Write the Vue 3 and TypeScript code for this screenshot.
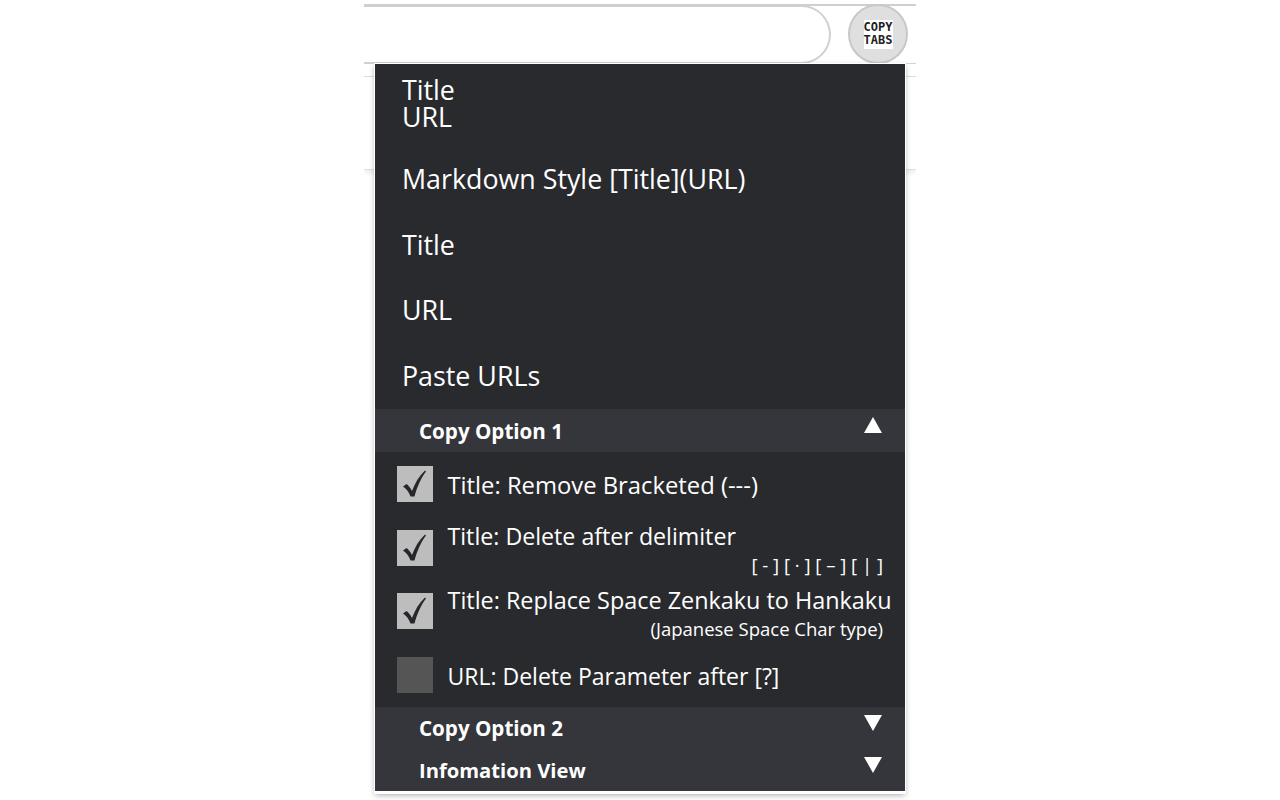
<template>
  <div class="stage">
    <div class="toolbar">
      <div class="urlbar"></div>
      <div class="logo-btn">
        <div class="logo">COPY<br />TABS</div>
      </div>
    </div>
    <div class="subbar"></div>
    <div class="pagebar"></div>

    <div class="popup">
      <div v-for="item in menuItems" :key="item.label" class="menu-item" :class="item.cls">
        <div class="menu-line">{{ item.text }}</div>
      </div>

      <div class="section open">
        <span>Copy Option 1</span>
        <svg class="arrow" viewBox="0 0 18 16" width="18" height="16"><path d="M9 0 L18 16 L0 16 Z" fill="#fff" /></svg>
      </div>

      <div class="options">
        <div v-for="opt in options" :key="opt.label" class="option" :class="opt.cls">
          <div class="box" :class="{ on: opt.checked }">
            <svg v-if="opt.checked" viewBox="0 0 36 36" width="36" height="36">
              <path d="M6 20.500 L9.500 18 C11.500 19.500 13.500 22 15 25 C18 17 22 10 28 4.500 L29 5.500 C24 12 20 21 17.500 30.500 L13.500 30.500 C12 26 9.500 23 6 20.500 Z" fill="#26272b" />
            </svg>
          </div>
          <div class="option-text">
            <div class="option-label">{{ opt.label }}</div>
            <div v-if="opt.note" class="option-note">{{ opt.note }}</div>
          </div>
        </div>
      </div>

      <div class="section closed">
        <span>Copy Option 2</span>
        <svg class="arrow" viewBox="0 0 18 16" width="18" height="16"><path d="M0 0 L18 0 L9 16 Z" fill="#fff" /></svg>
      </div>
      <div class="section closed">
        <span class="info">Infomation View</span>
        <svg class="arrow" viewBox="0 0 18 16" width="18" height="16"><path d="M0 0 L18 0 L9 16 Z" fill="#fff" /></svg>
      </div>
    </div>
  </div>
</template>

<script setup lang="ts">
const menuItems = [
  { label: "title-url", text: "Title\nURL", cls: "double" },
  { label: "markdown", text: "Markdown Style [Title](URL)", cls: "tall" },
  { label: "title", text: "Title", cls: "tall" },
  { label: "url", text: "URL", cls: "" },
  { label: "paste", text: "Paste URLs", cls: "tall" },
];

const options = [
  { label: "Title: Remove Bracketed (---)", checked: true, cls: "opt-a" },
  { label: "Title: Delete after delimiter", note: "[ - ] [ · ] [ – ] [ | ]", checked: true, cls: "opt-b" },
  { label: "Title: Replace Space Zenkaku to Hankaku", note: "(Japanese Space Char type)", checked: true, cls: "opt-c" },
  { label: "URL: Delete Parameter after [?]", checked: false, cls: "opt-d" },
];
</script>

<style>
html, body {
  margin: 0;
  background: #fff;
}
</style>

<style scoped>
.stage {
  position: relative;
  width: 552px;
  height: 800px;
  margin-left: 364px;
  overflow: hidden;
  font-family: "Open Sans", "Noto Sans", sans-serif;
  color: #fff;
}
.toolbar {
  display: flex;
  align-items: center;
  height: 60px;
  margin-top: 4px;
  box-sizing: border-box;
  border-top: 2px solid #cfcfcf;
  border-bottom: 1px solid #d4d4d4;
}
.urlbar {
  width: 467px;
  height: 59px;
  box-sizing: border-box;
  border: 2px solid #d0d0d0;
  border-left: 0;
  border-radius: 0 30px 30px 0;
  margin-top: -1px;
}
.logo-btn {
  display: flex;
  align-items: center;
  justify-content: center;
  width: 60px;
  height: 60px;
  margin-left: 17px;
  margin-top: -1px;
  box-sizing: border-box;
  border: 2px solid #c8c8c8;
  border-radius: 50%;
  background: #dfdfdf;
}
.logo {
  width: 29px;
  height: 28px;
  background: #fff;
  color: #222;
  font-family: "DejaVu Sans Mono", monospace;
  font-size: 12px;
  font-weight: 700;
  line-height: 13px;
  text-align: center;
  padding-top: 1px;
  white-space: nowrap;
}
.subbar {
  height: 12px;
  border-bottom: 1px solid #dcdcdc;
}
.pagebar {
  height: 92px;
  border-bottom: 1px solid #e2e2e2;
  box-shadow: 0 3px 4px #eee;
}
.popup {
  position: absolute;
  left: 11px;
  top: 64px;
  width: 530px;
  background: #292a2e;
  border-bottom: 2px solid #fff;
  box-shadow: 0 0 0 1px #fff, 0 2px 6px rgba(0, 0, 0, 0.35);
}
.menu-item {
  display: flex;
  flex-direction: column;
  justify-content: center;
  height: 65px;
  padding-left: 27px;
  font-size: 26.8px;
  line-height: 27px;
}
.menu-line {
  white-space: pre-line;
}
.menu-item.tall {
  height: 66px;
}
.menu-item.double {
  height: 81px;
  justify-content: flex-start;
  padding-top: 12px;
  box-sizing: border-box;
}
.section {
  display: flex;
  justify-content: space-between;
  height: 42px;
  padding: 7px 23px 0 44px;
  background: #35363c;
  font-size: 20.6px;
  font-weight: 700;
  box-sizing: border-box;
}
.section span {
  line-height: 28px;
}
.section .info {
  font-size: 20.2px;
}
.section .arrow {
  margin-top: 1px;
}
.section.open {
  height: 43px;
  margin-top: 1px;
  padding-top: 8px;
}
.section.open .arrow {
  margin-top: 0;
}
.options {
  display: flex;
  flex-direction: column;
  height: 255px;
  padding: 0 22px;
  box-sizing: border-box;
}
.option {
  display: flex;
  column-gap: 14.5px;
  height: 64px;
  padding-top: 14px;
  box-sizing: border-box;
}
.opt-b {
  height: 63px;
}
.box {
  flex: none;
  width: 36px;
  height: 36px;
  background: #555;
}
.box.on {
  background: #bdbdbd;
}
.box svg {
  display: block;
}
.option-text {
  flex: 1;
  min-width: 0;
}
.option-label {
  font-size: 23.4px;
  line-height: 36px;
  white-space: nowrap;
}
.opt-a .option-label {
  margin-top: 1px;
  font-size: 23.8px;
}
.opt-b .option-label {
  margin-top: -12px;
  font-size: 23.2px;
}
.opt-c .option-label {
  margin-top: -11px;
}
.opt-d .option-label {
  margin-top: 1px;
  font-size: 23px;
}
.option-note {
  font-size: 18.5px;
  line-height: 22px;
  text-align: right;
  white-space: nowrap;
}
</style>
